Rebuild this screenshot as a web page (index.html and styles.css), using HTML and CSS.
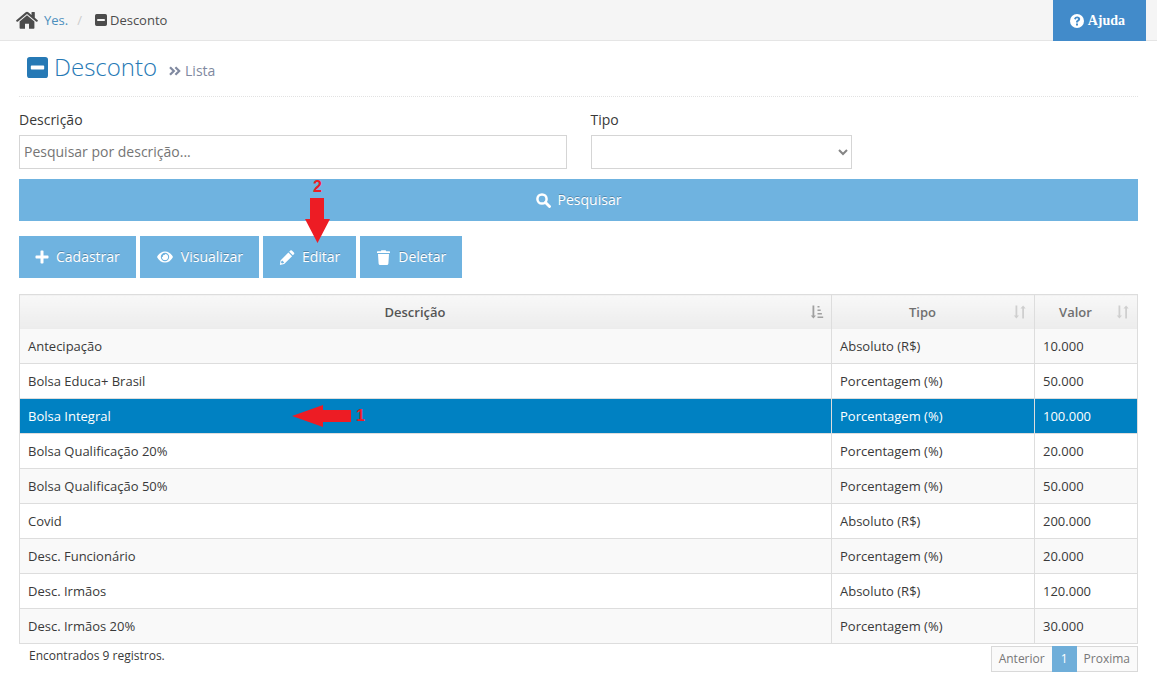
FILE: index.html
```html
<!DOCTYPE html>
<html lang="pt-BR">
<head>
<meta charset="utf-8">
<meta name="viewport" content="width=device-width, initial-scale=1">
<title>Desconto</title>
<link rel="stylesheet" href="styles.css">
</head>
<body>
<svg class="sprite" aria-hidden="true">
  <symbol id="home" viewBox="0 0 22 18"><path d="M11 4.2 3.6 10.400V17q0 .8.8.8H9v-5h4v5h4.600q.8 0 .8-.8v-6.600zM.3 9.200 9.700 1.200q1.300-1 2.600 0L15.500 3.900V1.500q0-.5.5-.5h2.300q.5 0 .5.500v5.200l2.900 2.500q.4.300.1.700l-.7.800q-.3.300-.8 0L11 3 1.700 10.700q-.4.300-.8 0L.2 9.900q-.3-.4.100-.7z"/></symbol>
  <symbol id="minus-square" viewBox="0 0 22 22"><path fill-rule="evenodd" d="M3 0h16q3 0 3 3v16q0 3-3 3H3q-3 0-3-3V3Q0 0 3 0zm1.800 9q-.8 0-.8.8v2.400q0 .8.800.8h12.400q.8 0 .8-.8V9.800q0-.8-.8-.8z"/></symbol>
  <symbol id="help" viewBox="0 0 14 14"><circle cx="7" cy="7" r="7"/><path fill="#428bca" d="M4 4.700Q4.900 2.500 7.100 2.500c1.800 0 3.100 1.100 3.100 2.600 0 2-2.200 2.100-2.200 3.400H6c0-2.400 2.100-2.400 2.100-3.400 0-1.100-1.800-1.200-2.500.6zM6 9.500h2v2H6z"/></symbol>
  <symbol id="search" viewBox="0 0 15 15"><circle cx="6" cy="6" r="4.600" fill="none" stroke="currentColor" stroke-width="2.500"/><path d="m9.500 9.500 4 4" fill="none" stroke="currentColor" stroke-width="2.900" stroke-linecap="round"/></symbol>
  <symbol id="plus" viewBox="0 0 14 14"><path d="M5.500 1.200q0-.7.700-.7h1.600q.7 0 .7.700v4.300h4.300q.7 0 .7.700v1.600q0 .7-.7.700H8.500v4.300q0 .7-.7.700H6.200q-.7 0-.7-.7V8.500H1.200q-.7 0-.7-.7V6.200q0-.7.700-.7h4.300z"/></symbol>
  <symbol id="eye" viewBox="0 0 16 12"><path fill-rule="evenodd" d="M0 6q2.900-5.500 8-5.500T16 6q-2.900 5.500-8 5.500T0 6zm8-4.200a4.200 4.200 0 1 0 0 8.400 4.200 4.200 0 0 0 0-8.400z"/><path d="M8 2.900A3.100 3.100 0 1 1 4.900 6h.8A2.300 2.300 0 0 1 8 3.700z"/><circle cx="8" cy="6" r="2.100"/></symbol>
  <symbol id="pencil" viewBox="0 0 15 15"><path fill-rule="evenodd" d="m1 10.400 7.900-7.900 3.700 3.700-7.900 7.900L.4 14.900zm.9.800-.4 1.400 1 1 1.500-.5.700-.7-2-2zM9.700 1.700 10.800.6q.8-.8 1.600 0l2 2q.8.800 0 1.600l-1.100 1.100z"/></symbol>
  <symbol id="trash" viewBox="0 0 13 15"><path d="M.6 1.300h3.200L4.400.2h4.200l.6 1.100h3.200q.6 0 .6.700v1H0V2q0-.7.600-.7zM1 4h11l-.6 9.500q-.1 1.500-1.500 1.500H3.100q-1.400 0-1.500-1.500z"/></symbol>
  <symbol id="angles" viewBox="0 0 12 10"><path d="m1 1.200 3.800 3.800L1 8.800m5.400-7.600L10.200 5 6.400 8.800" fill="none" stroke="currentColor" stroke-width="2.200"/></symbol>
  <symbol id="sort" viewBox="0 0 14 14"><path d="M2.500.5h1.800v10H6L3.400 13.500.8 10.500h1.700zM9.200 13.500H11v-10h1.700L10.100.5 7.500 3.500h1.700z"/></symbol>
  <symbol id="sort-asc" viewBox="0 0 14 14"><path d="M2.500.5h1.800v10H6L3.400 13.500.8 10.500h1.700zM7.500 1h2v1.600h-2zm0 3.500h3.200v1.600H7.500zm0 3.500h4.400v1.600H7.500zm0 3.500h5.700v1.600H7.500z"/></symbol>
</svg>

<header class="topbar">
  <nav class="breadcrumb" aria-label="Localização">
    <svg class="home-icon"><use href="#home"/></svg>
    <a href="#inicio">Yes.</a>
    <span class="slash">/</span>
    <svg class="crumb-icon"><use href="#minus-square"/></svg>
    <span>Desconto</span>
  </nav>
  <button class="help" type="button"><svg class="icon14"><use href="#help"/></svg>Ajuda</button>
</header>

<main class="content">
  <div class="page-header">
    <svg class="title-icon"><use href="#minus-square"/></svg>
    <h1>Desconto</h1>
    <p class="subtitle"><svg class="angles"><use href="#angles"/></svg>Lista</p>
  </div>

  <form class="filters">
    <div class="field wide">
      <label for="descricao">Descrição</label>
      <input id="descricao" type="text" placeholder="Pesquisar por descrição...">
    </div>
    <div class="field">
      <label for="tipo">Tipo</label>
      <select id="tipo"><option></option><option>Absoluto (R$)</option><option>Porcentagem (%)</option></select>
    </div>
    <button class="btn search" type="button"><svg class="icon15"><use href="#search"/></svg>Pesquisar</button>
  </form>

  <div class="toolbar">
    <button class="btn" type="button"><svg class="icon14"><use href="#plus"/></svg>Cadastrar</button>
    <button class="btn" type="button"><svg class="icon-eye"><use href="#eye"/></svg>Visualizar</button>
    <div class="step-anchor">
      <button class="btn" type="button"><svg class="icon16"><use href="#pencil"/></svg>Editar</button>
      <div class="step step-two"><span>2</span><svg width="25" height="45" viewBox="0 0 25 45"><path d="M5 0h14v21h6L12.500 45 0 21h5z"/></svg></div>
    </div>
    <button class="btn" type="button"><svg class="icon15"><use href="#trash"/></svg>Deletar</button>
  </div>

  <table class="grid">
    <colgroup><col><col class="col-type"><col class="col-value"></colgroup>
    <thead>
      <tr>
        <th scope="col"><div class="head"><span>Descrição</span><svg class="sort active"><use href="#sort-asc"/></svg></div></th>
        <th scope="col"><div class="head"><span>Tipo</span><svg class="sort"><use href="#sort"/></svg></div></th>
        <th scope="col"><div class="head"><span>Valor</span><svg class="sort"><use href="#sort"/></svg></div></th>
      </tr>
    </thead>
    <tbody>
      <tr><td>Antecipação</td><td>Absoluto (R$)</td><td>10.000</td></tr>
      <tr><td>Bolsa Educa+ Brasil</td><td>Porcentagem (%)</td><td>50.000</td></tr>
      <tr class="selected">
        <td><div class="step-anchor">Bolsa Integral
          <div class="step step-one"><svg width="60" height="22" viewBox="0 0 60 22"><path d="M0 11 31 0v5h28v12H31v5z"/></svg><span>1</span></div>
        </div></td>
        <td>Porcentagem (%)</td><td>100.000</td></tr>
      <tr><td>Bolsa Qualificação 20%</td><td>Porcentagem (%)</td><td>20.000</td></tr>
      <tr><td>Bolsa Qualificação 50%</td><td>Porcentagem (%)</td><td>50.000</td></tr>
      <tr><td>Covid</td><td>Absoluto (R$)</td><td>200.000</td></tr>
      <tr><td>Desc. Funcionário</td><td>Porcentagem (%)</td><td>20.000</td></tr>
      <tr><td>Desc. Irmãos</td><td>Absoluto (R$)</td><td>120.000</td></tr>
      <tr><td>Desc. Irmãos 20%</td><td>Porcentagem (%)</td><td>30.000</td></tr>
    </tbody>
  </table>

  <footer class="table-footer">
    <p>Encontrados 9 registros.</p>
    <nav class="pager" aria-label="Paginação">
      <a href="#anterior">Anterior</a>
      <a href="#1" class="current" aria-current="page">1</a>
      <a href="#proxima">Proxima</a>
    </nav>
  </footer>
</main>
</body>
</html>
```
FILE: styles.css
```css
* { box-sizing: border-box; }
body {
  margin: 0;
  background: #fff;
  color: #393939;
  font: 13px/20px "Open Sans", sans-serif;
}
h1, p { margin: 0; font-weight: 400; }
a { text-decoration: none; }
svg { fill: currentColor; flex: none; }
.sprite { position: absolute; width: 0; height: 0; }
.icon14 { width: 14px; height: 14px; }
.icon15 { width: 15px; height: 15px; }
.icon16 { width: 16px; height: 15px; }
.icon-eye { width: 18px; height: 12px; }

.topbar {
  display: flex;
  justify-content: space-between;
  height: 41px;
  padding-right: 11px;
  background: #f5f5f5;
  border-bottom: 1px solid #e5e5e5;
}
.breadcrumb {
  display: flex;
  align-items: center;
  padding-left: 16px;
  color: #4c4c4c;
}
.breadcrumb a { color: #4c8fbd; }
.home-icon { width: 22px; height: 18px; margin-right: 6px; }
.slash { margin: 0 13px 0 9px; color: #ccc; }
.crumb-icon { width: 12px; height: 12px; margin-right: 3px; }
.help {
  display: flex;
  align-items: center;
  gap: 4px;
  height: 41px;
  padding: 0 21px 0 17px;
  border: 0;
  background: #428bca;
  color: #fff;
  font: bold 14px/20px "Liberation Serif", serif;
}

.content { padding: 0 19px; }
.page-header {
  display: flex;
  align-items: center;
  height: 56px;
  padding: 0 8px 3px;
  border-bottom: 1px dotted #e2e2e2;
  color: #2679b5;
}
.title-icon { width: 21px; height: 21px; margin-right: 6px; }
.page-header h1 { font-size: 24px; line-height: 32px; font-weight: 300; }
.subtitle {
  display: flex;
  align-items: center;
  gap: 4px;
  margin-left: 12px;
  padding-top: 7px;
  color: #8089a0;
  font-size: 14px;
}
.angles { width: 12px; height: 10px; }

.filters {
  display: grid;
  grid-template-columns: repeat(12, 1fr);
  gap: 10px 24px;
  padding-top: 13px;
}
.field { grid-column: span 3; }
.field.wide { grid-column: span 6; }
.field label { display: block; margin-bottom: 5px; font-size: 14px; }
.field input, .field select {
  display: block;
  width: 100%;
  height: 34px;
  padding: 4px 4px 6px;
  border: 1px solid #d5d5d5;
  border-radius: 0;
  background: #fff;
  color: #858585;
  font: 14px/20px "Open Sans", sans-serif;
}
.field input::placeholder { color: #757575; }

.btn {
  display: flex;
  align-items: center;
  justify-content: center;
  gap: 7px;
  height: 42px;
  padding: 0 16px;
  border: 0;
  background: #6fb3e0;
  color: #fff;
  font: 14px/20px "Open Sans", sans-serif;
  text-shadow: 0 -1px 0 rgba(0, 0, 0, .25);
}
.search { grid-column: 1 / -1; }
.toolbar { display: flex; gap: 4px; margin: 15px 0 16px; }
.step-anchor { position: relative; }
.step {
  position: absolute;
  display: flex;
  align-items: center;
  color: #ed1c24;
  font: bold 16px/16px "Liberation Sans", sans-serif;
  pointer-events: none;
}
.step-two { left: 42px; top: -57px; flex-direction: column; gap: 3px; }
.step-one { left: 264px; top: -1px; gap: 4px; }

.grid {
  width: 100%;
  table-layout: fixed;
  border-collapse: collapse;
  border: 1px solid #ddd;
}
.col-type { width: 203px; }
.col-value { width: 103px; }
.grid th, .grid td {
  height: 35px;
  padding: 0 8px;
  border: 1px solid #ddd;
  text-align: left;
}
.grid th {
  height: 34px;
  padding-right: 7px;
  border-bottom: 0;
  background: linear-gradient(#f8f8f8, #ececec);
  color: #707070;
  font-weight: 600;
}
.grid th:first-child { color: #555; }
.head { display: flex; align-items: center; gap: 8px; }
.head span { flex: 1; text-align: center; }
.head .sort { width: 14px; height: 14px; color: #cfcfcf; }
.head .active { color: #a0a0a0; }
.grid tbody tr:first-child td { border-top: 0; }
.grid tbody tr:nth-child(odd) { background: #f9f9f9; }
.grid tbody tr.selected { background: #0081c2; color: #fff; }

.table-footer {
  display: flex;
  justify-content: space-between;
  align-items: flex-start;
  padding-top: 2px;
}
.table-footer p { padding-left: 10px; font-size: 12px; }
.pager {
  display: flex;
  border: 1px solid #d9d9d9;
  background: #fafafa;
  font-size: 12px;
}
.pager a { padding: 2px 7px; color: #777; }
.pager .current { margin: -1px 0; padding: 3px 9px; background: #6faed9; color: #fff; }
```
